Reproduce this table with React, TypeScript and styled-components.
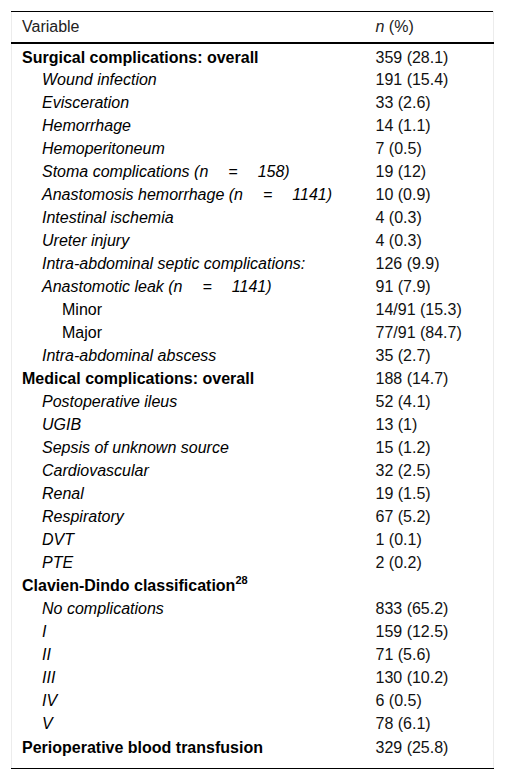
import React from "react";
import styled, { createGlobalStyle } from "styled-components";

const Global = createGlobalStyle`
  html, body { margin: 0; padding: 0; background: #fff; }
  body { font-family: "Liberation Sans", Arial, sans-serif; color: #000; }
`;

const Wrap = styled.div`
  padding: 11px 11px 0 11px;
`;

const Table = styled.table`
  width: 483px;
  border-collapse: collapse;
  border-left: 1px solid #ececec;
  border-right: 1px solid #ececec;
  border-top: 1px solid #000;
  border-bottom: 1px solid #000;
  font-size: 16px;
  line-height: 18px;
  table-layout: fixed;
`;

const HeadCell = styled.th<{ $w?: number }>`
  text-align: left;
  font-weight: normal;
  color: #222;
  height: 31px;
  padding: 1px 10px 0 10px;
  border-bottom: 2px solid #000;
  ${(p) => (p.$w ? `width: ${p.$w}px;` : "")}
  box-sizing: border-box;
`;

const Row = styled.tr<{ $first?: boolean; $last?: boolean }>`
  & > td {
    height: ${(p) => (p.$last ? 33 : p.$first ? 26 : 23)}px;
    vertical-align: ${(p) => (p.$last ? "top" : "bottom")};
    padding-top: ${(p) => (p.$last ? 3 : 0)}px;
    padding-bottom: ${(p) => (p.$last ? 0 : p.$first ? 2 : 3)}px;
  }
`;

const LabelCell = styled.td<{ $level: number; $bold?: boolean; $italic?: boolean }>`
  padding: 0 10px 0 ${(p) => 10 + p.$level * 20}px;
  font-weight: ${(p) => (p.$bold ? "bold" : "normal")};
  font-style: ${(p) => (p.$italic ? "italic" : "normal")};
  white-space: nowrap;
  box-sizing: border-box;
`;

const ValueCell = styled.td`
  padding: 0 10px;
  color: #111;
  box-sizing: border-box;
`;

const Eq = styled.span`
  padding: 0 20px;
`;

const Sup = styled.sup`
  font-size: 11px;
  line-height: 0;
  vertical-align: 7px;
`;

const N = () => (
  <>
    n<Eq>=</Eq>
  </>
);

type R = {
  label: React.ReactNode;
  value: string;
  level: number;
  bold?: boolean;
  italic?: boolean;
};

const rows: R[] = [
  { label: "Surgical complications: overall", value: "359 (28.1)", level: 0, bold: true },
  { label: "Wound infection", value: "191 (15.4)", level: 1, italic: true },
  { label: "Evisceration", value: "33 (2.6)", level: 1, italic: true },
  { label: "Hemorrhage", value: "14 (1.1)", level: 1, italic: true },
  { label: "Hemoperitoneum", value: "7 (0.5)", level: 1, italic: true },
  { label: <>Stoma complications (<N />158)</>, value: "19 (12)", level: 1, italic: true },
  { label: <>Anastomosis hemorrhage (<N />1141)</>, value: "10 (0.9)", level: 1, italic: true },
  { label: "Intestinal ischemia", value: "4 (0.3)", level: 1, italic: true },
  { label: "Ureter injury", value: "4 (0.3)", level: 1, italic: true },
  { label: "Intra-abdominal septic complications:", value: "126 (9.9)", level: 1, italic: true },
  { label: <>Anastomotic leak (<N />1141)</>, value: "91 (7.9)", level: 1, italic: true },
  { label: "Minor", value: "14/91 (15.3)", level: 2 },
  { label: "Major", value: "77/91 (84.7)", level: 2 },
  { label: "Intra-abdominal abscess", value: "35 (2.7)", level: 1, italic: true },
  { label: "Medical complications: overall", value: "188 (14.7)", level: 0, bold: true },
  { label: "Postoperative ileus", value: "52 (4.1)", level: 1, italic: true },
  { label: "UGIB", value: "13 (1)", level: 1, italic: true },
  { label: "Sepsis of unknown source", value: "15 (1.2)", level: 1, italic: true },
  { label: "Cardiovascular", value: "32 (2.5)", level: 1, italic: true },
  { label: "Renal", value: "19 (1.5)", level: 1, italic: true },
  { label: "Respiratory", value: "67 (5.2)", level: 1, italic: true },
  { label: "DVT", value: "1 (0.1)", level: 1, italic: true },
  { label: "PTE", value: "2 (0.2)", level: 1, italic: true },
  { label: <>Clavien-Dindo classification<Sup>28</Sup></>, value: "", level: 0, bold: true },
  { label: "No complications", value: "833 (65.2)", level: 1, italic: true },
  { label: "I", value: "159 (12.5)", level: 1, italic: true },
  { label: "II", value: "71 (5.6)", level: 1, italic: true },
  { label: "III", value: "130 (10.2)", level: 1, italic: true },
  { label: "IV", value: "6 (0.5)", level: 1, italic: true },
  { label: "V", value: "78 (6.1)", level: 1, italic: true },
  { label: "Perioperative blood transfusion", value: "329 (25.8)", level: 0, bold: true },
];

export default function App() {
  return (
    <Wrap>
      <Global />
      <Table>
        <thead>
          <tr>
            <HeadCell $w={354}>Variable</HeadCell>
            <HeadCell>
              <i>n</i> (%)
            </HeadCell>
          </tr>
        </thead>
        <tbody>
          {rows.map((r, i) => (
            <Row key={i} $first={i === 0} $last={i === rows.length - 1}>
              <LabelCell $level={r.level} $bold={r.bold} $italic={r.italic}>
                {r.label}
              </LabelCell>
              <ValueCell>{r.value}</ValueCell>
            </Row>
          ))}
        </tbody>
      </Table>
    </Wrap>
  );
}
